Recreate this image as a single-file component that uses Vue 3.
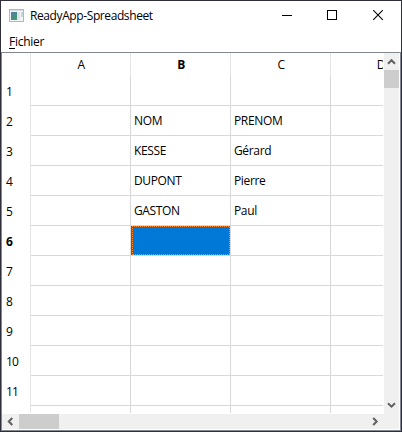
<script setup>
const columns = ['A', 'B', 'C', 'D']
const values = {
  B2: 'NOM', C2: 'PRENOM',
  B3: 'KESSE', C3: 'Gérard',
  B4: 'DUPONT', C4: 'Pierre',
  B5: 'GASTON', C5: 'Paul',
}
const selected = { column: 'B', row: 6 }
const isSelected = (c, r) => c === selected.column && r === selected.row
</script>

<template>
  <div class="window">
    <header class="titlebar">
      <svg class="logo" width="15" height="13" viewBox="0 0 15 13">
        <defs>
          <linearGradient id="pane" x1="0" y1="0" x2="0.5" y2="1">
            <stop offset="0" stop-color="#4f7fa8" />
            <stop offset="1" stop-color="#43966f" />
          </linearGradient>
        </defs>
        <rect x="0.5" y="0.5" width="14" height="12" fill="#f4f5f6" stroke="#b4b7ba" />
        <rect x="1" y="1" width="13" height="1" fill="#dadde0" />
        <rect x="2" y="3" width="6" height="8" fill="url(#pane)" />
        <rect x="8" y="3" width="3" height="8" fill="#dfe5e9" />
        <rect x="12" y="3" width="2" height="5" fill="#c3d8d5" />
      </svg>
      <span class="title">ReadyApp-Spreadsheet</span>
      <svg class="controls" width="104" height="12" viewBox="0 0 104 12" fill="none" stroke="#000">
        <path d="M0 5.5H10" />
        <rect x="45.5" y="0.5" width="9" height="9" />
        <path d="M91.2 0.2L100.8 9.8M100.8 0.2L91.2 9.8" stroke-width="1.1" />
      </svg>
    </header>
    <nav class="menubar"><span class="menu"><u>F</u>ichier</span></nav>
    <main class="sheet">
      <div class="grid">
        <div class="row head">
          <div class="label"></div>
          <div v-for="c in columns" :key="c" class="cell" :class="{ strong: c === selected.column }">{{ c }}</div>
        </div>
        <div v-for="r in 12" :key="r" class="row">
          <div class="label" :class="{ strong: r === selected.row }"><span>{{ r }}</span></div>
          <div v-for="c in columns" :key="c" class="cell" :class="{ selected: isSelected(c, r) }">
            <svg v-if="isSelected(c, r)" class="focus" width="99" height="29" shape-rendering="crispEdges">
              <rect width="99" height="29" fill="#0078d7" />
              <path
                d="M1 0.5H99M2 28.5H99M1.5 0V29M98.5 1V29"
                fill="none"
                stroke="#ff8728"
                stroke-width="1"
                stroke-dasharray="1 1"
              />
            </svg>
            <span v-else>{{ values[c + r] }}</span>
          </div>
        </div>
      </div>
      <div class="vbar">
        <svg width="15" height="17" viewBox="0 0 15 17"><path d="M4 10.7L7.5 7.2L11 10.7" /></svg>
        <div class="thumb"></div>
        <svg width="15" height="17" viewBox="0 0 15 17"><path d="M4 6.2L7.5 9.7L11 6.2" /></svg>
      </div>
      <div class="hbar">
        <svg width="17" height="15" viewBox="0 0 17 15"><path d="M10.3 4L6.8 7.5L10.3 11" /></svg>
        <div class="thumb"></div>
        <svg width="17" height="15" viewBox="0 0 17 15"><path d="M6.2 4L9.7 7.5L6.2 11" /></svg>
      </div>
      <div class="corner"></div>
    </main>
  </div>
</template>

<style>
body { margin: 0; overflow: hidden; }
</style>

<style scoped>
.window {
  box-sizing: border-box;
  width: 402px;
  height: 432px;
  border: 1px solid #2f303b;
  background: #fff;
  color: #000;
  font: 12px/16px "Open Sans", "Noto Sans", sans-serif;
  display: flex;
  flex-direction: column;
}
.titlebar {
  height: 30px;
  display: flex;
  align-items: flex-start;
}
.logo { margin: 8px 0 0 8px; }
.title {
  margin: 7px 0 0 6px;
  width: 252px;
  letter-spacing: -0.4px;
  white-space: nowrap;
}
.controls { margin-top: 9px; }
.menubar { height: 21px; padding-left: 8px; }
.menu { display: block; padding-top: 3px; letter-spacing: -0.25px; }
.menu u { text-underline-offset: 2px; text-decoration-thickness: 1px; }
.sheet {
  box-sizing: border-box;
  width: 400px;
  height: 379px;
  border: 1px solid #828790;
  display: grid;
  grid-template-columns: 382px 15px;
  grid-template-rows: 361px 15px;
}
.grid { overflow: hidden; width: 381px; height: 360px; }
.row { display: flex; height: 30px; width: 429px; }
.head { height: 23px; }
.label {
  box-sizing: border-box;
  width: 29px;
  padding: 8px 0 0 4px;
  border-right: 1px solid #e5e5e5;
  letter-spacing: -0.8px;
}
.cell {
  box-sizing: border-box;
  width: 100px;
  padding: 7px 0 0 3px;
  border-right: 1px solid #d8d8d8;
  border-bottom: 1px solid #d8d8d8;
  letter-spacing: -0.35px;
}
.head .cell {
  padding: 4px 0 0 1px;
  text-align: center;
  border-right-color: #e5e5e5;
  border-bottom: 0;
}
.strong { font-weight: 700; }
.cell.selected { padding: 0; }
.focus { display: block; }
.vbar, .hbar { background: #f0f0f0; display: flex; }
.vbar { flex-direction: column; height: 361px; }
.hbar { height: 15px; }
.vbar .thumb { height: 18px; background: #cdcdcd; margin-bottom: auto; }
.hbar .thumb { width: 40px; background: #cdcdcd; margin-right: auto; }
.vbar path, .hbar path { fill: none; stroke: #606060; stroke-width: 2; }
.corner { background: #f0f0f0; }
</style>
